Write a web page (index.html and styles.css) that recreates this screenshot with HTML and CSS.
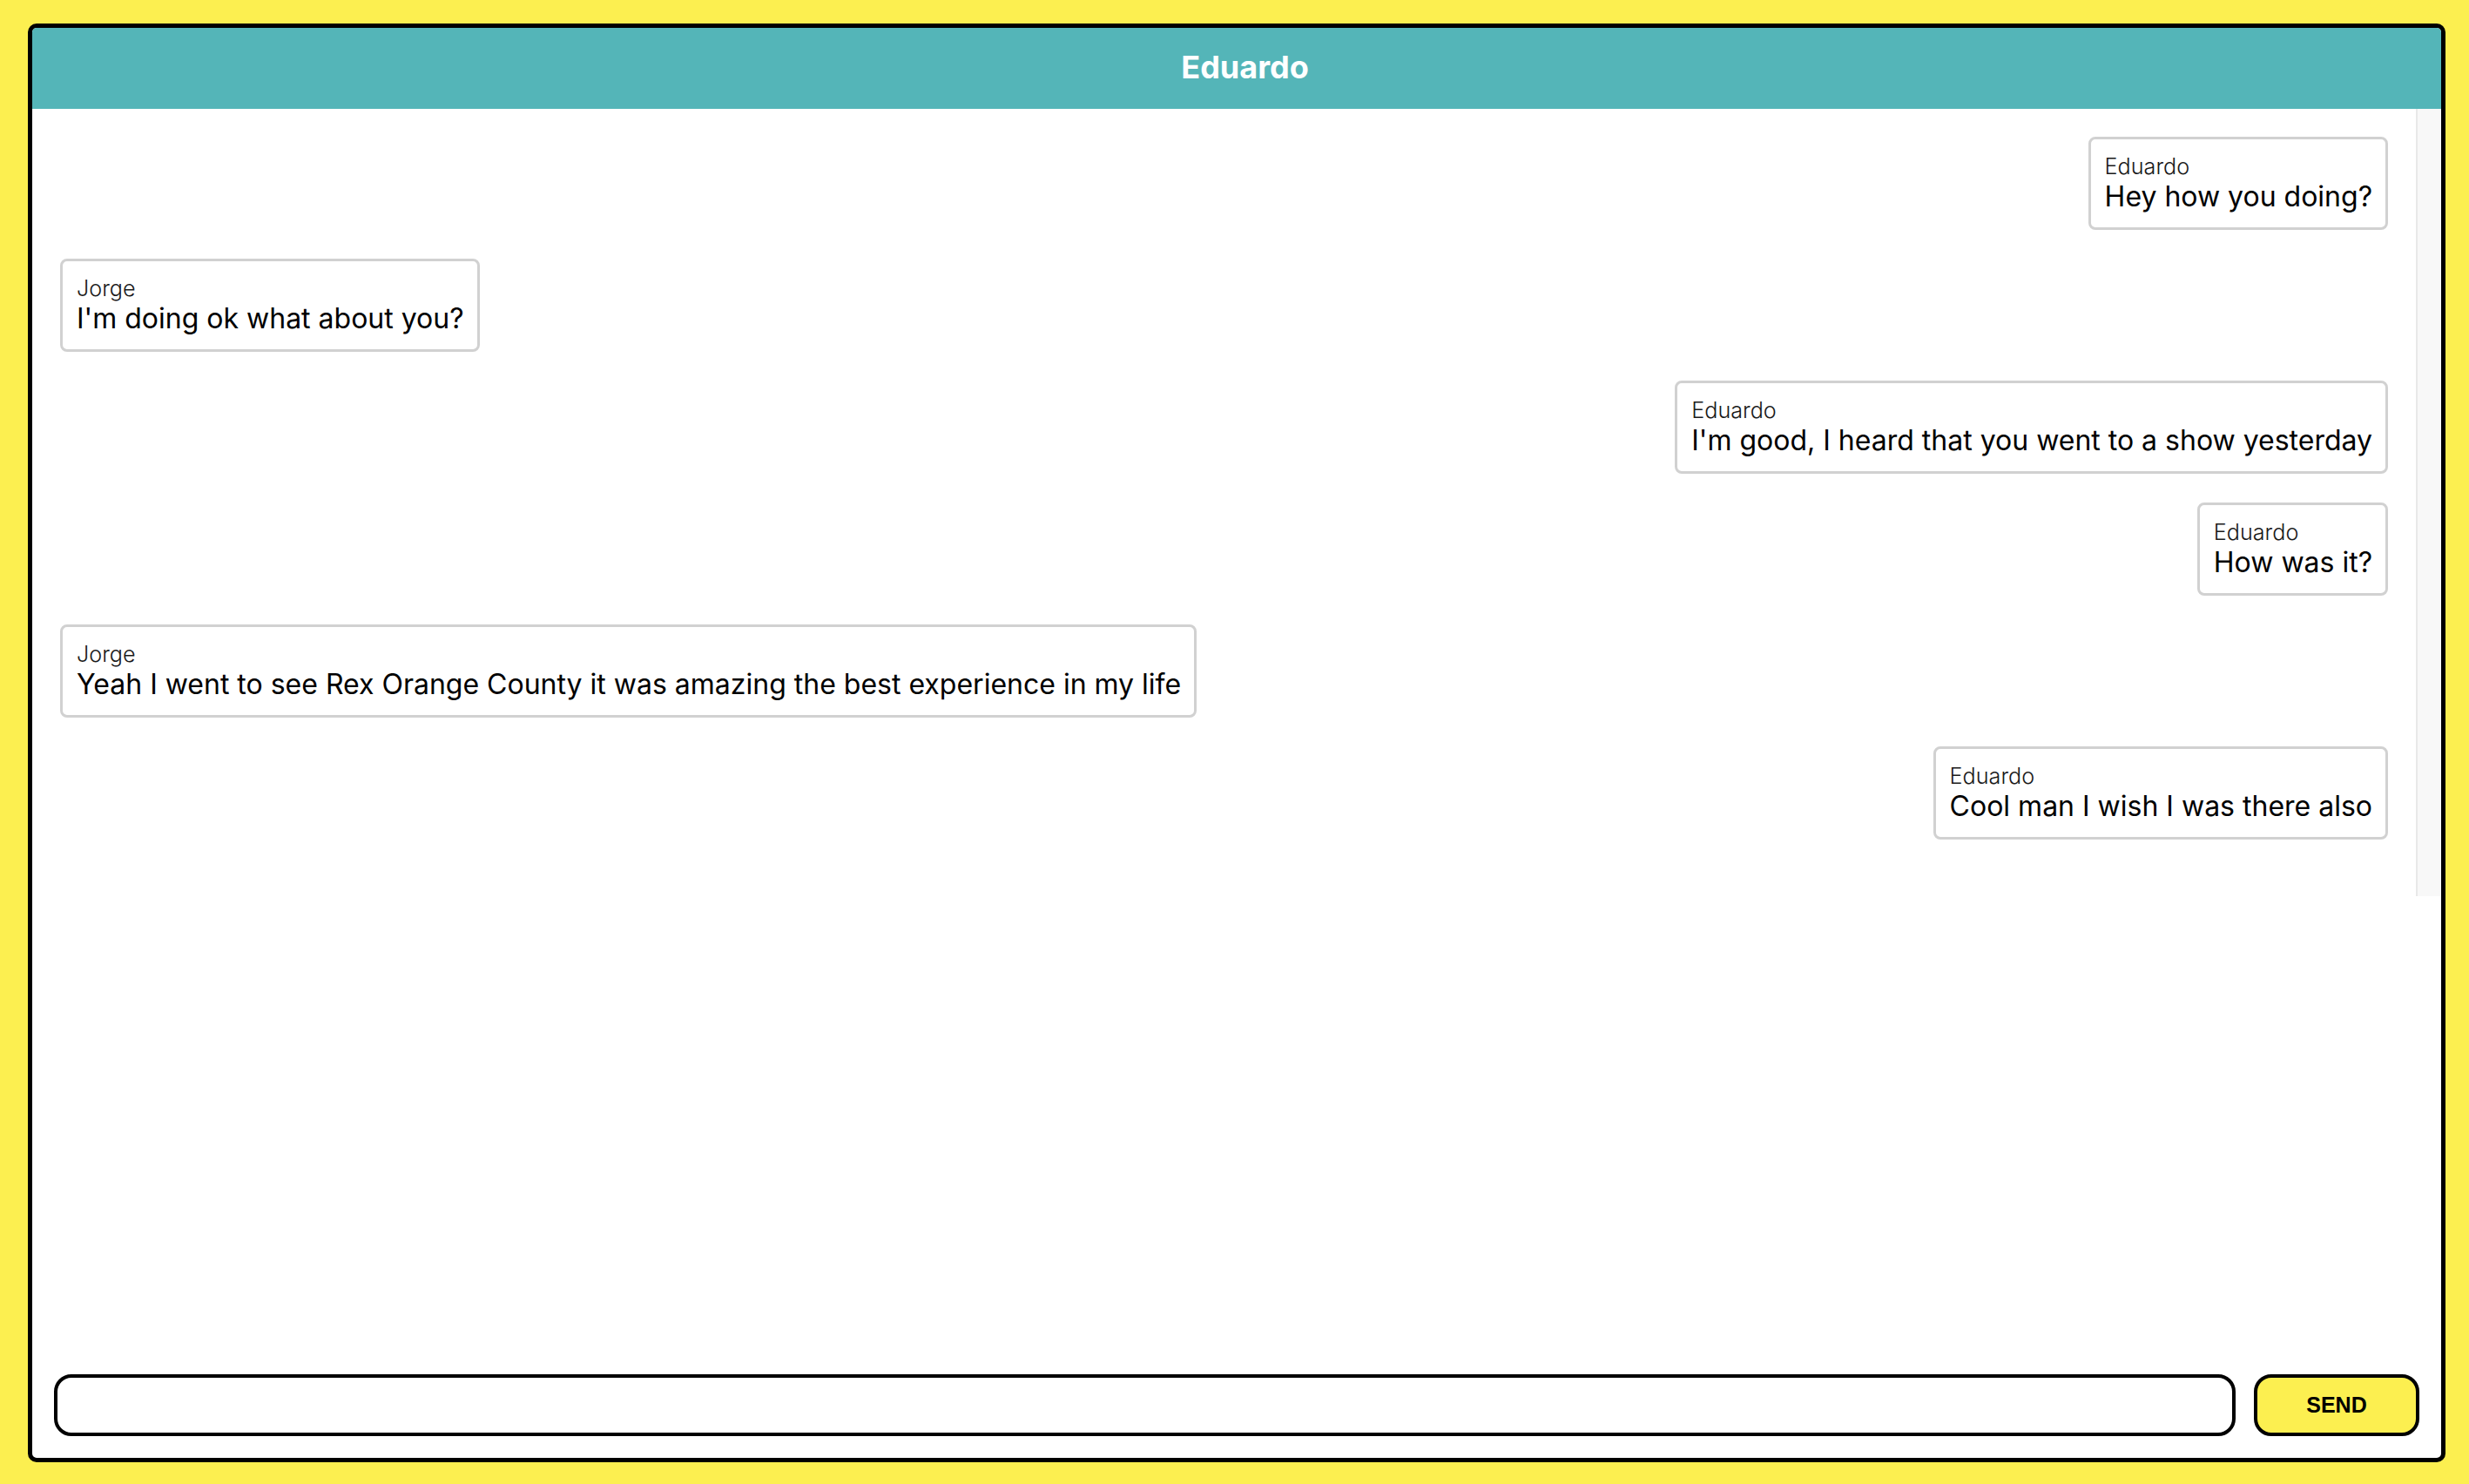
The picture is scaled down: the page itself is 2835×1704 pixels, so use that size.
FILE: index.html
```html
<!DOCTYPE html>
<html lang="en">
<head>
<meta charset="utf-8">
<title>Chat - Eduardo</title>
<link rel="stylesheet" href="styles.css">
</head>
<body>
<div class="chat">
  <header class="chat-header">
    <h1 class="chat-title">Eduardo</h1>
  </header>
  <div class="chat-body">
    <ul class="messages">
      <li class="message message--mine">
        <span class="message-author">Eduardo</span>
        <p class="message-text">Hey how you doing?</p>
      </li>
      <li class="message">
        <span class="message-author">Jorge</span>
        <p class="message-text">I'm doing ok what about you?</p>
      </li>
      <li class="message message--mine">
        <span class="message-author">Eduardo</span>
        <p class="message-text">I'm good, I heard that you went to a show yesterday</p>
      </li>
      <li class="message message--mine">
        <span class="message-author">Eduardo</span>
        <p class="message-text">How was it?</p>
      </li>
      <li class="message">
        <span class="message-author">Jorge</span>
        <p class="message-text">Yeah I went to see Rex Orange County it was amazing the best experience in my life</p>
      </li>
      <li class="message message--mine">
        <span class="message-author">Eduardo</span>
        <p class="message-text">Cool man I wish I was there also</p>
      </li>
    </ul>
    <div class="scroll-track"></div>
  </div>
  <form class="composer">
    <input class="composer-input" type="text" aria-label="Message">
    <button class="composer-send" type="button">SEND</button>
  </form>
</div>
</body>
</html>
```

FILE: styles.css
```css
html, body {
  margin: 0;
  padding: 0;
}

body {
  background: #fcef50;
  font-family: Inter, "Noto Sans", sans-serif;
  height: 1704px;
  overflow: hidden;
}

.chat {
  box-sizing: border-box;
  margin: 27px 27px 0 32px;
  height: 1652px;
  border: 5px solid #000;
  border-radius: 10px;
  background: #fff;
  overflow: hidden;
  display: flex;
  flex-direction: column;
}

.chat-header {
  flex: none;
  box-sizing: border-box;
  height: 93px;
  background: #54b5b8;
  display: flex;
  align-items: center;
  justify-content: center;
  padding: 0 0 3px 19px;
}

.chat-title {
  margin: 0;
  font-size: 36px;
  font-weight: 700;
  color: #fff;
  line-height: 1;
}

.chat-body {
  flex: none;
  height: 904px;
  display: flex;
}

.messages {
  flex: 1;
  list-style: none;
  margin: 0;
  padding: 32px;
  display: flex;
  flex-direction: column;
  align-items: flex-start;
  gap: 33px;
}

.message {
  box-sizing: border-box;
  border: 3px solid #d1d1d1;
  border-radius: 8px;
  padding: 16px 15px 16px 16px;
  display: flex;
  flex-direction: column;
  background: #fff;
}

.message--mine {
  align-self: flex-end;
}

.message-author {
  font-size: 25.2px;
  font-weight: 300;
  color: #1a1a1a;
}

.message-text {
  margin: 0;
  font-size: 32px;
  font-weight: 400;
  color: #000;
  line-height: 39px;
}

.scroll-track {
  flex: none;
  width: 27px;
  background: #f8f8f8;
  border-left: 2px solid #e8e8e8;
}

.composer {
  margin: auto 0 0;
  padding: 25px;
  display: flex;
  gap: 21.5px;
}

.composer-input {
  flex: 1;
  box-sizing: border-box;
  height: 71px;
  border: 4px solid #000;
  border-radius: 20px;
  background: #fff;
  padding: 0 20px;
  font-family: Inter, "Noto Sans", sans-serif;
  font-size: 29px;
  outline: none;
}

.composer-send {
  flex: none;
  box-sizing: border-box;
  width: 190px;
  height: 71px;
  border: 4px solid #000;
  border-radius: 20px;
  background: #fcef50;
  color: #000;
  font-family: "Liberation Sans", Arial, sans-serif;
  font-weight: 700;
  font-size: 25px;
  padding: 0;
}
```
